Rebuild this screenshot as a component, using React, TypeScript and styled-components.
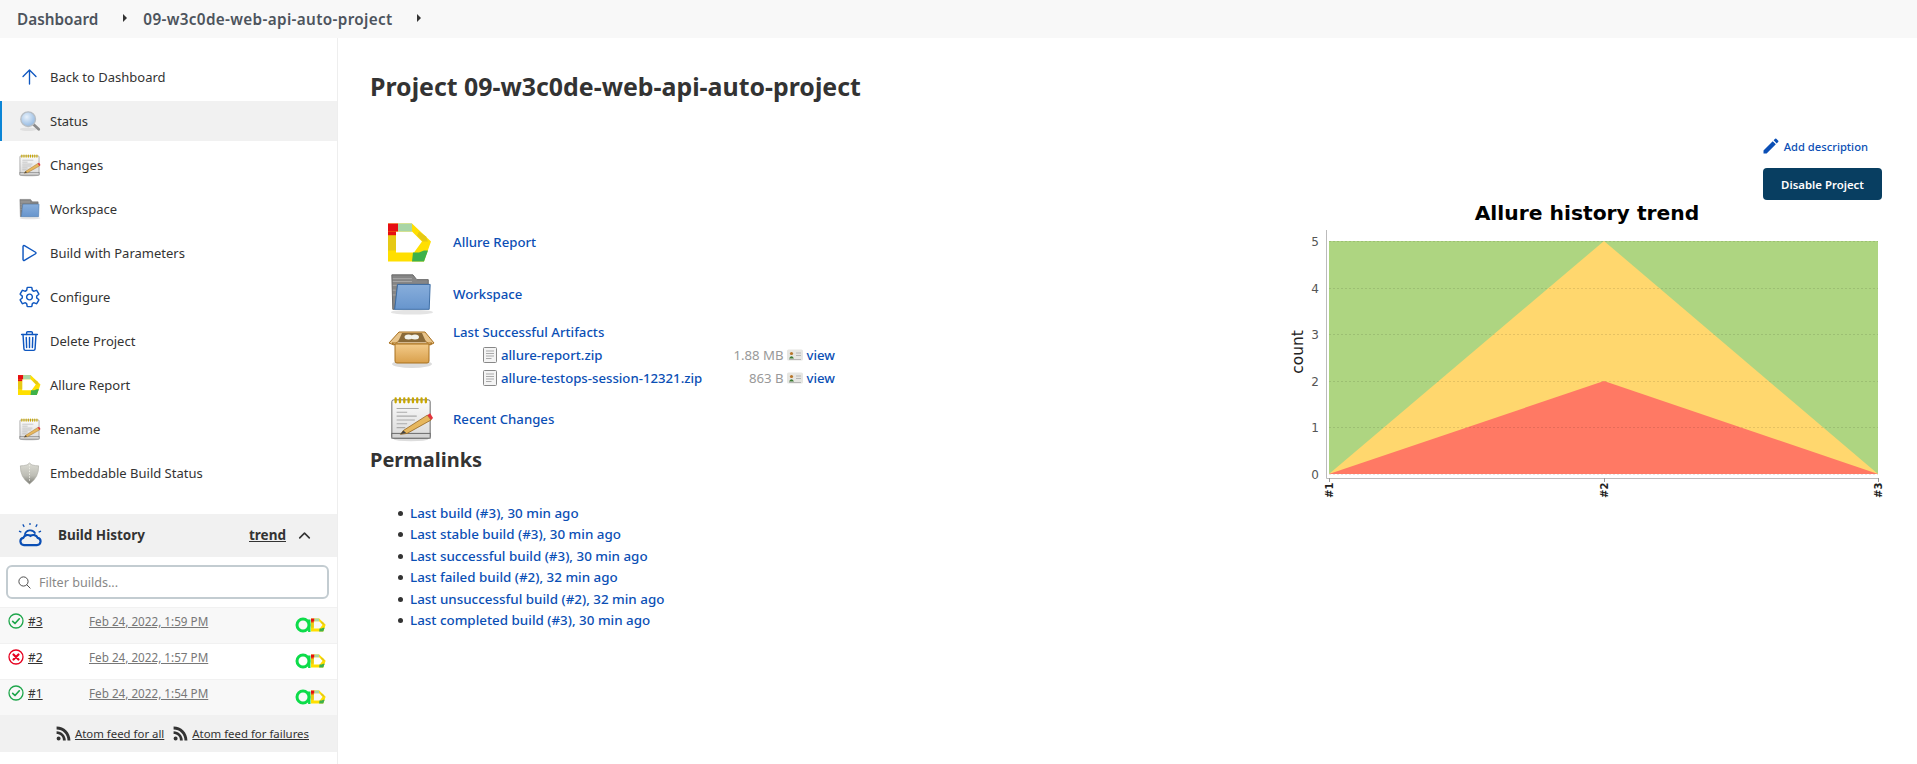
import styled, { createGlobalStyle } from 'styled-components';
import {
  IoArrowUpOutline,
  IoChevronUpOutline,
  IoPlayOutline,
  IoSearchOutline,
  IoSettingsOutline,
  IoTrashOutline,
  IoLogoRss,
} from 'react-icons/io5';
import { MdEdit } from 'react-icons/md';
import type { ReactNode } from 'react';

const GlobalStyle = createGlobalStyle`
  html, body {
    margin: 0;
    padding: 0;
    height: 764px;
    overflow: hidden;
    background: #fff;
    font-family: "Noto Sans", "Open Sans", sans-serif;
    font-size: 14px;
    color: #333;
  }
  * { box-sizing: border-box; }
`;

const Page = styled.div`
  display: flex;
  flex-direction: column;
  height: 764px;
`;

const Breadcrumbs = styled.nav`
  display: flex;
  align-items: center;
  height: 38px;
  padding-left: 17px;
  background: #f8f8f8;
  color: #4d545d;
  font-size: 15.3px;
  font-weight: 600;
`;

const Crumb = styled.span<{ $gap: number; $spacing?: number }>`
  margin-right: ${({ $gap }) => $gap}px;
  letter-spacing: ${({ $spacing }) => $spacing ?? 0}px;
`;

const CrumbArrow = styled.span`
  width: 0;
  height: 0;
  margin-top: -3px;
  margin-right: 16px;
  border-top: 4px solid transparent;
  border-bottom: 4px solid transparent;
  border-left: 4px solid #333;
`;

const Body = styled.div`
  display: flex;
  flex: 1;
  min-height: 0;
`;

const Sidebar = styled.aside`
  flex: 0 0 338px;
  padding-top: 19px;
  border-right: 1px solid #eee;
`;

const Tasks = styled.div`
  display: flex;
  flex-direction: column;
  gap: 4px;
  margin-bottom: 21px;
`;

const Task = styled.a<{ $active?: boolean }>`
  display: flex;
  align-items: center;
  gap: 9px;
  height: 40px;
  padding-left: ${({ $active }) => ($active ? 16 : 18)}px;
  border-left: ${({ $active }) => ($active ? '2px solid #0b85d6' : 'none')};
  background: ${({ $active }) => ($active ? '#f1f1f1' : 'transparent')};
  color: #333;
  font-size: 13px;
`;

const TaskIcon = styled.span`
  display: flex;
  align-items: center;
  justify-content: center;
  width: 23px;
  height: 24px;
  color: #0f57c0;
  font-size: 24px;
`;

const ThinArrow = styled(IoArrowUpOutline)`
  path,
  polyline,
  line {
    stroke-width: 30px !important;
  }
`;

const HistoryHeader = styled.div`
  display: flex;
  align-items: center;
  height: 43px;
  padding: 0 0 2px 18px;
  background: #f1f1f1;
  font-size: 13.5px;
  font-weight: 700;
`;

const HistoryIcon = styled.span`
  display: flex;
  width: 24px;
  margin-right: 16px;
`;

const HistoryTitle = styled.span`
  flex: 1;
`;

const Trend = styled.a`
  color: #333;
  text-decoration: underline;
`;

const Collapse = styled.span`
  display: flex;
  margin: 2px 24px 0 10px;
  color: #333;
  font-size: 17px;
`;

const FilterBox = styled.div`
  display: flex;
  align-items: center;
  gap: 7px;
  height: 34px;
  margin: 8px 8px 8px 6px;
  padding-left: 9px;
  border: 2px solid #c3ccd1;
  border-radius: 6px;
  color: #888;
  font-size: 12.6px;
`;

const FilterIcon = styled.span`
  display: flex;
  color: #444;
  font-size: 15px;
`;

const BuildRow = styled.div<{ $striped?: boolean }>`
  display: flex;
  height: 36px;
  padding: 5px 11px 0 8px;
  border-top: 1px solid #f1f1f1;
  background: ${({ $striped }) => ($striped ? '#f8f8f8' : '#fff')};
  font-size: 12px;
`;

const BuildStatus = styled.span`
  width: 20px;
  height: 16px;
`;

const BuildNumber = styled.a`
  width: 61px;
  color: #333;
  text-decoration: underline;
`;

const BuildDate = styled.a`
  flex: 1;
  color: #777;
  font-size: 11.7px;
  text-decoration: underline;
`;

const BuildBadges = styled.span`
  display: flex;
  align-items: center;
  height: 24px;
`;

const FeedBar = styled.div`
  display: flex;
  align-items: center;
  justify-content: flex-end;
  gap: 8px;
  height: 37px;
  padding-right: 28px;
  background: #f1f1f1;
  font-size: 11.4px;
`;

const FeedLink = styled.a`
  display: flex;
  align-items: center;
  gap: 3px;
  color: #333;
  text-decoration: underline;
`;

const FeedIcon = styled.span`
  display: flex;
  font-size: 17px;
`;

const Main = styled.main`
  flex: 1;
  min-width: 0;
  padding: 0 35px 0 32px;
`;

const Title = styled.h1`
  margin: 0;
  padding-top: 31px;
  height: 98px;
  color: #333;
  font-size: 24.9px;
  font-weight: 700;
  line-height: 35px;
`;

const Columns = styled.div`
  display: flex;
  justify-content: space-between;
`;

const LeftColumn = styled.div`
  padding-top: 82px;
`;

const RightColumn = styled.div`
  display: flex;
  flex-direction: column;
  align-items: flex-end;
`;

const Link = styled.a`
  color: #0b4fb5;
  font-size: 13.2px;
  font-weight: 500;
`;

const AddDescription = styled.a`
  display: flex;
  align-items: center;
  gap: 3px;
  height: 20px;
  margin-right: 14px;
  color: #0b4fb5;
  font-size: 11.2px;
  font-weight: 500;
`;

const PencilWrap = styled.span`
  display: flex;
  font-size: 20px;
`;

const DisableButton = styled.button`
  width: 119px;
  height: 32px;
  margin-top: 12px;
  border: none;
  border-radius: 4px;
  background: #083e61;
  color: #fff;
  font-family: inherit;
  font-size: 11.4px;
  font-weight: 600;
`;

const ChartSvg = styled.svg`
  display: block;
  width: 600px;
  height: 300px;
  margin-top: 3px;
  overflow: visible;
`;

const ProjectRow = styled.div<{ $height: number; $gap?: number }>`
  display: flex;
  align-items: center;
  height: ${({ $height }) => $height}px;
  margin-bottom: ${({ $gap }) => $gap ?? 0}px;
  padding-left: 18px;
`;

const ProjectIcon = styled.span`
  display: flex;
  justify-content: flex-start;
  width: 65px;
`;

const ArtifactRow = styled.div`
  display: flex;
  align-items: flex-start;
  height: 68px;
  margin: 3px 0 6px;
  padding-left: 18px;
`;

const ArtifactBox = styled.span`
  display: flex;
  width: 65px;
  padding-top: 5px;
`;

const ArtifactContent = styled.div`
  display: flex;
  flex-direction: column;
`;

const ArtifactHead = styled.div`
  height: 22px;
  line-height: 22px;
`;

const FileRow = styled.div`
  display: flex;
  align-items: center;
  width: 352px;
  height: 23px;
  margin-left: 30px;
`;

const FileName = styled(Link)`
  flex: 1;
  margin-left: 4px;
`;

const FileSize = styled.span`
  margin-right: 3px;
  color: #999;
  font-size: 13.2px;
`;

const ViewLink = styled(Link)`
  margin-left: 4px;
`;

const Subtitle = styled.h2`
  margin: 3px 0 0;
  color: #333;
  font-size: 20px;
  font-weight: 700;
  line-height: 28px;
`;

const Permalinks = styled.ul`
  margin: 28.5px 0 0;
  padding: 0 0 0 28px;
  list-style: none;
  font-size: 13.4px;
  line-height: 21.5px;
`;

const Permalink = styled.li`
  display: flex;
  align-items: center;
  gap: 7px;
  height: 21.5px;

  &::before {
    content: '';
    width: 5px;
    height: 5px;
    border-radius: 50%;
    background: #333;
  }
`;

const PermalinkText = styled(Link)`
  font-size: 13.4px;
`;

function AllureIcon({ width, height }: { width: number; height: number }) {
  return (
    <svg width={width} height={height} viewBox="0 0 44 38">
      <path d="M0 0H24L43 18L36 38H0ZM8 8V29H26L34 18L24 8Z" fill="#ffdf00" fillRule="evenodd" />
      <rect x="0" y="0" width="10" height="8" fill="#e60d12" />
      <rect x="0" y="8" width="8" height="4" fill="#e60d12" />
      <rect x="10" y="0" width="14" height="8" fill="#a8d5a6" />
      <rect x="0" y="12" width="8" height="15" fill="#e6c915" />
      <path d="M31 8L38 13L40 18H35L29 12Z" fill="#e6c915" />
      <path d="M24 38H36L40 27H36L31 29H25Z" fill="#3db14b" />
    </svg>
  );
}

function FolderIcon({ size }: { size: number }) {
  return (
    <svg width={size} height={size} viewBox="0 0 48 48">
      <defs>
        <linearGradient id="folderFront" x1="0" y1="0" x2="0" y2="1">
          <stop offset="0" stopColor="#88aedb" />
          <stop offset="1" stopColor="#6795cd" />
        </linearGradient>
      </defs>
      <ellipse cx="25" cy="43" rx="22" ry="2.5" fill="#e4e4e4" />
      <path d="M4 4H26L30 9H42V14H10L7 40H5Z" fill="#868686" stroke="#666" />
      <path d="M5 8H25M5 11H25M5 15H9M5 20H8M5 25H8" stroke="#aaa" />
      <path d="M10 14H44L43 40H7Z" fill="url(#folderFront)" stroke="#3a6ba3" strokeWidth="1" />
    </svg>
  );
}

function BoxIcon({ size }: { size: number }) {
  return (
    <svg width={size} height={size} viewBox="0 0 48 48">
      <defs>
        <linearGradient id="boxFront" x1="0" y1="0" x2="0" y2="1">
          <stop offset="0" stopColor="#f3cb8a" />
          <stop offset="1" stopColor="#d9a04c" />
        </linearGradient>
      </defs>
      <ellipse cx="24" cy="38" rx="20" ry="4" fill="#dcdcdc" />
      <path d="M11 6H37L46 17L42 19L35 13H13L6 19L1 17Z" fill="#e8c48a" stroke="#a8701f" />
      <path d="M14 7H34L38 16H10Z" fill="#8a6a38" />
      <ellipse cx="20.500" cy="11" rx="4" ry="2.500" fill="#f2f2ea" />
      <ellipse cx="27" cy="11" rx="4" ry="2.500" fill="#f2f2ea" />
      <path d="M4 17H44L41 19H7Z" fill="#eccf9f" stroke="#a8701f" />
      <path d="M7 18H41V35Q41 37 39 37H9Q7 37 7 35Z" fill="url(#boxFront)" stroke="#a8701f" />
    </svg>
  );
}

function NotepadIcon({ size }: { size: number }) {
  return (
    <svg width={size} height={size} viewBox="0 0 48 48">
      <defs>
        <linearGradient id="padPage" x1="0" y1="0" x2="0" y2="1">
          <stop offset="0" stopColor="#fbfbfb" />
          <stop offset="1" stopColor="#d9d9d9" />
        </linearGradient>
      </defs>
      <ellipse cx="24" cy="45.500" rx="18" ry="1.600" fill="#ddd" />
      <rect x="4" y="4" width="40" height="40" rx="2" fill="url(#padPage)" stroke="#666" />
      <rect x="4" y="39" width="40" height="5" fill="#d4d4d4" stroke="#666" />
      <path
        d="M8 2.500V6.500M12.500 2.500V6.500M17 2.500V6.500M21.500 2.500V6.500M26 2.500V6.500M30.500 2.500V6.500M35 2.500V6.500M39.500 2.500V6.500"
        stroke="#c9a700"
        strokeWidth="2.400"
        strokeLinecap="round"
      />
      <path d="M9 13H32M9 17H20M9 21H30M9 25H28M9 29H20M9 33H18" stroke="#aaa" strokeWidth="1.200" />
      <path d="M16 36L41 20L45 25L20 39L13 40Z" fill="#e6b75e" stroke="#93621d" strokeWidth="0.800" />
      <path d="M41 20L44 18L47 23L45 25Z" fill="#e2343c" />
      <path d="M13 40L16 36L19 38.500Z" fill="#444" />
    </svg>
  );
}

function LensIcon({ size }: { size: number }) {
  return (
    <svg width={size} height={size} viewBox="0 0 24 24">
      <defs>
        <radialGradient id="lensGlass" cx="0.4" cy="0.35" r="0.7">
          <stop offset="0" stopColor="#e7f1fb" />
          <stop offset="1" stopColor="#8fb6e0" />
        </radialGradient>
      </defs>
      <ellipse cx="10" cy="21" rx="9" ry="2" fill="#e0e0e0" />
      <path d="M15 15L21.500 21" stroke="#8a8a8a" strokeWidth="3" strokeLinecap="round" />
      <circle cx="10" cy="10" r="8" fill="url(#lensGlass)" stroke="#b8bec4" strokeWidth="1.500" />
    </svg>
  );
}

function ShieldIcon({ size }: { size: number }) {
  return (
    <svg width={size} height={size} viewBox="0 0 24 24">
      <defs>
        <linearGradient id="shieldBody" x1="0" y1="0" x2="0" y2="1">
          <stop offset="0" stopColor="#dcdcd4" />
          <stop offset="0.6" stopColor="#bdbdb5" />
          <stop offset="1" stopColor="#7c7c75" />
        </linearGradient>
      </defs>
      <path
        d="M12 1L14.500 3Q18 4 21.500 4Q22 16 12 23Q2 16 2.500 4Q6 4 9.500 3Z"
        fill="url(#shieldBody)"
        stroke="#a2a29a"
        strokeWidth="0.600"
      />
      <path d="M12 3V21" stroke="#ecece4" strokeDasharray="1.500 1.500" />
    </svg>
  );
}

function CloudSunIcon() {
  return (
    <svg width={25} height={25} viewBox="0 0 25 25" fill="none" stroke="#0b4fb5">
      <path d="M7 13A5.800 5.800 0 0 1 18 11.500" strokeWidth="1.800" />
      <path
        d="M6.500 23.500H19.500A3.800 3.800 0 0 0 20.500 16A5 5 0 0 0 13 14A5 5 0 0 0 5.500 16A3.800 3.800 0 0 0 6.500 23.500Z"
        strokeWidth="2.300"
      />
      <path d="M5 2L6.500 4.500M12.500 0.500V2.500M20 2L18.500 4.500M1 9L3.500 10M24 9L21.500 10" strokeWidth="1.300" />
    </svg>
  );
}

function FileIcon() {
  return (
    <svg width={14} height={16} viewBox="0 0 14 16">
      <rect x="0.500" y="0.500" width="13" height="15" rx="1" fill="#f4f4f4" stroke="#888" />
      <path d="M3 4H11M3 6.500H11M3 9H11M3 11.500H8.500" stroke="#aaa" />
    </svg>
  );
}

function ViewIcon() {
  return (
    <svg width={16} height={12} viewBox="0 0 16 12">
      <rect x="0" y="0.500" width="16" height="11" rx="1.500" fill="#e6e6e2" />
      <circle cx="4.500" cy="4.500" r="1.600" fill="#b8762a" />
      <path d="M2 9.500Q4.500 5 7 9.500Z" fill="#3d7a35" />
      <path d="M9 4H14M9 6.500H14M2 10.500H14" stroke="#aaa" strokeWidth="0.800" />
    </svg>
  );
}

function StatusOk() {
  return (
    <svg width={16} height={16} viewBox="0 0 16 16">
      <circle cx="8" cy="8" r="7" fill="none" stroke="#1ea64b" strokeWidth="1.300" />
      <path
        d="M4.700 8.300L7 10.500L11.300 5.800"
        fill="none"
        stroke="#1ea64b"
        strokeWidth="1.700"
        strokeLinecap="round"
        strokeLinejoin="round"
      />
    </svg>
  );
}

function StatusFailed() {
  return (
    <svg width={16} height={16} viewBox="0 0 16 16">
      <circle cx="8" cy="8" r="7" fill="none" stroke="#e6001f" strokeWidth="1.300" />
      <path d="M5.500 5.500L10.500 10.500M10.500 5.500L5.500 10.500" stroke="#e6001f" strokeWidth="2.200" strokeLinecap="round" />
    </svg>
  );
}

function GreenRing() {
  return (
    <svg width={16} height={16} viewBox="0 0 16 16">
      <circle cx="8" cy="8" r="6" fill="none" stroke="#0ddc4a" strokeWidth="3" />
      <path d="M14.300 2.500V15" stroke="#0ddc4a" strokeWidth="2.400" />
    </svg>
  );
}

function BuildTrendChart() {
  const ticks = [
    { label: '5', y: 38 },
    { label: '4', y: 85 },
    { label: '3', y: 131 },
    { label: '2', y: 178 },
    { label: '1', y: 224 },
    { label: '0', y: 271 },
  ];
  const xTicks = [
    { label: '#1', x: 47 },
    { label: '#2', x: 322 },
    { label: '#3', x: 596 },
  ];

  return (
    <ChartSvg viewBox="0 0 600 300">
      <text
        x="305"
        y="17"
        textAnchor="middle"
        fontFamily="DejaVu Sans"
        fontWeight="700"
        fontSize="20.300"
        fill="#000"
      >
        Allure history trend
      </text>
      <rect x="47" y="38" width="549" height="233" fill="#aed581" />
      <path d="M47 271L322 38L596 271Z" fill="#ffd76e" />
      <path d="M47 271L322 178L596 271Z" fill="#ff7964" />
      {ticks.map((tick) => (
        <path
          key={tick.label}
          d={`M47 ${tick.y + 0.5}H596`}
          stroke="#000"
          strokeOpacity="0.1"
          strokeDasharray="2 2"
        />
      ))}
      <path d="M44.500 27V275.500H596.500" fill="none" stroke="#bbb" />
      {ticks.map((tick) => (
        <text
          key={tick.label}
          x="37"
          y={tick.y + 5}
          textAnchor="end"
          fontFamily="DejaVu Sans"
          fontSize="12"
          fill="#555"
        >
          {tick.label}
        </text>
      ))}
      {xTicks.map((tick) => (
        <g key={tick.label}>
          <path d={`M${tick.x + 0.5} 275V279`} stroke="#999" />
          <text
            transform={`translate(${tick.x + 3.5} 295) rotate(-90)`}
            fontFamily="DejaVu Sans"
            fontWeight="700"
            fontSize="10"
            fill="#222"
          >
            {tick.label}
          </text>
        </g>
      ))}
      <text
        transform="translate(21 149) rotate(-90)"
        textAnchor="middle"
        fontFamily="DejaVu Sans"
        fontSize="15.400"
        fill="#222"
      >
        count
      </text>
    </ChartSvg>
  );
}

const tasks: { label: string; icon: ReactNode; active?: boolean }[] = [
  { label: 'Back to Dashboard', icon: <ThinArrow /> },
  { label: 'Status', icon: <LensIcon size={22} />, active: true },
  { label: 'Changes', icon: <NotepadIcon size={23} /> },
  { label: 'Workspace', icon: <FolderIcon size={24} /> },
  { label: 'Build with Parameters', icon: <IoPlayOutline /> },
  { label: 'Configure', icon: <IoSettingsOutline /> },
  { label: 'Delete Project', icon: <IoTrashOutline /> },
  { label: 'Allure Report', icon: <AllureIcon width={23} height={20} /> },
  { label: 'Rename', icon: <NotepadIcon size={23} /> },
  { label: 'Embeddable Build Status', icon: <ShieldIcon size={23} /> },
];

const builds = [
  { number: '#3', date: 'Feb 24, 2022, 1:59 PM', ok: true },
  { number: '#2', date: 'Feb 24, 2022, 1:57 PM', ok: false },
  { number: '#1', date: 'Feb 24, 2022, 1:54 PM', ok: true },
];

const permalinks = [
  'Last build (#3), 30 min ago',
  'Last stable build (#3), 30 min ago',
  'Last successful build (#3), 30 min ago',
  'Last failed build (#2), 32 min ago',
  'Last unsuccessful build (#2), 32 min ago',
  'Last completed build (#3), 30 min ago',
];

const artifacts = [
  { name: 'allure-report.zip', size: '1.88 MB' },
  { name: 'allure-testops-session-12321.zip', size: '863 B' },
];

export default function App() {
  return (
    <Page>
      <GlobalStyle />
      <Breadcrumbs>
        <Crumb $gap={25}>Dashboard</Crumb>
        <CrumbArrow />
        <Crumb $gap={24} $spacing={0.33}>09-w3c0de-web-api-auto-project</Crumb>
        <CrumbArrow />
      </Breadcrumbs>
      <Body>
        <Sidebar>
          <Tasks>
            {tasks.map((task) => (
              <Task key={task.label} $active={task.active}>
                <TaskIcon>{task.icon}</TaskIcon>
                {task.label}
              </Task>
            ))}
          </Tasks>
          <HistoryHeader>
            <HistoryIcon>
              <CloudSunIcon />
            </HistoryIcon>
            <HistoryTitle>Build History</HistoryTitle>
            <Trend>trend</Trend>
            <Collapse>
              <IoChevronUpOutline />
            </Collapse>
          </HistoryHeader>
          <FilterBox>
            <FilterIcon>
              <IoSearchOutline />
            </FilterIcon>
            Filter builds...
          </FilterBox>
          {builds.map((build, index) => (
            <BuildRow key={build.number} $striped={index % 2 === 0}>
              <BuildStatus>{build.ok ? <StatusOk /> : <StatusFailed />}</BuildStatus>
              <BuildNumber>{build.number}</BuildNumber>
              <BuildDate>{build.date}</BuildDate>
              <BuildBadges>
                <GreenRing />
                <AllureIcon width={15} height={14} />
              </BuildBadges>
            </BuildRow>
          ))}
          <FeedBar>
            <FeedLink>
              <FeedIcon>
                <IoLogoRss />
              </FeedIcon>
              Atom feed for all
            </FeedLink>
            <FeedLink>
              <FeedIcon>
                <IoLogoRss />
              </FeedIcon>
              Atom feed for failures
            </FeedLink>
          </FeedBar>
        </Sidebar>
        <Main>
          <Title>Project 09-w3c0de-web-api-auto-project</Title>
          <Columns>
            <LeftColumn>
              <ProjectRow $height={48} $gap={4}>
                <ProjectIcon>
                  <AllureIcon width={44} height={39} />
                </ProjectIcon>
                <Link>Allure Report</Link>
              </ProjectRow>
              <ProjectRow $height={48}>
                <ProjectIcon>
                  <FolderIcon size={46} />
                </ProjectIcon>
                <Link>Workspace</Link>
              </ProjectRow>
              <ArtifactRow>
                <ArtifactBox>
                  <BoxIcon size={48} />
                </ArtifactBox>
                <ArtifactContent>
                  <ArtifactHead>
                    <Link>Last Successful Artifacts</Link>
                  </ArtifactHead>
                  {artifacts.map((artifact) => (
                    <FileRow key={artifact.name}>
                      <FileIcon />
                      <FileName>{artifact.name}</FileName>
                      <FileSize>{artifact.size}</FileSize>
                      <ViewIcon />
                      <ViewLink>view</ViewLink>
                    </FileRow>
                  ))}
                </ArtifactContent>
              </ArtifactRow>
              <ProjectRow $height={48}>
                <ProjectIcon>
                  <NotepadIcon size={46} />
                </ProjectIcon>
                <Link>Recent Changes</Link>
              </ProjectRow>
              <Subtitle>Permalinks</Subtitle>
              <Permalinks>
                {permalinks.map((text) => (
                  <Permalink key={text}>
                    <PermalinkText>{text}</PermalinkText>
                  </Permalink>
                ))}
              </Permalinks>
            </LeftColumn>
            <RightColumn>
              <AddDescription>
                <PencilWrap>
                  <MdEdit />
                </PencilWrap>
                Add description
              </AddDescription>
              <DisableButton>Disable Project</DisableButton>
              <BuildTrendChart />
            </RightColumn>
          </Columns>
        </Main>
      </Body>
    </Page>
  );
}
